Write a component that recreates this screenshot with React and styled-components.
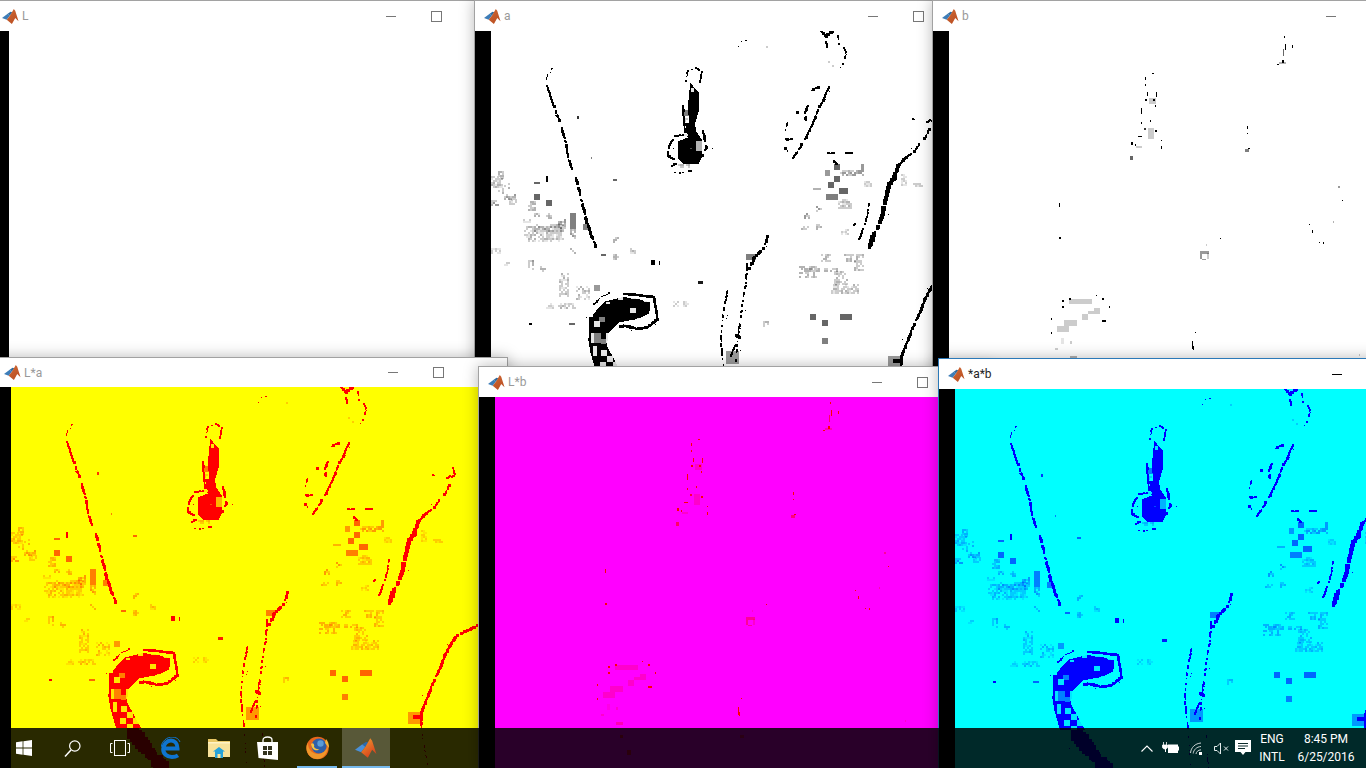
import styled, { createGlobalStyle } from "styled-components";

const GlobalStyle = createGlobalStyle`
    html, body {
        margin: 0;
        padding: 0;
        background: #000;
        overflow: hidden;
    }

    * {
        box-sizing: border-box;
    }
`;

const Desktop = styled.div`
    font-family: Roboto, "Noto Sans", sans-serif;
    height: 768px;
    overflow: hidden;
    position: relative;
    width: 1366px;
`;

const Janela = styled.div`
    background: #fff;
    border: 1px solid ${(p) => (p.$ativa ? "#2b79b8" : "#a2a2a2")};
    box-shadow: 0 0 14px rgba(0, 0, 0, 0.28);
    display: flex;
    flex-direction: column;
    height: ${(p) => 770 - p.$y}px;
    left: ${(p) => p.$x - 1}px;
    overflow: hidden;
    position: absolute;
    top: ${(p) => p.$y}px;
    width: 514px;
`;

const BarraTitulo = styled.div`
    align-items: center;
    background: #fff;
    display: grid;
    flex: none;
    grid-template-columns: 393px 45px 1fr;
    height: ${(p) => p.$altura}px;
`;

const Titulo = styled.div`
    align-items: center;
    color: ${(p) => (p.$ativa ? "#222" : "#999")};
    display: flex;
    font-size: 12px;
    gap: 3px;
    padding-left: 9px;
`;

const Minimizar = styled.span`
    background: ${(p) => (p.$ativa ? "#000" : "#777")};
    display: block;
    height: 1px;
    width: 10px;
`;

const Maximizar = styled.span`
    border: 1px solid #777;
    display: block;
    height: 11px;
    width: 11px;
`;

const Corpo = styled.div`
    display: flex;
    flex: 1;
    min-height: 0;
`;

const Faixa = styled.div`
    background: #000;
    flex: none;
    width: 16px;
`;

const Imagem = styled.div`
    background: ${(p) => p.$fundo};
    flex: 1;
    overflow: hidden;
`;

const Desenho = styled.svg`
    display: block;
    shape-rendering: crispEdges;
`;

const BarraTarefas = styled.div`
    align-items: stretch;
    background: rgba(0, 0, 0, 0.84);
    bottom: 0;
    display: flex;
    height: 40px;
    justify-content: space-between;
    left: 0;
    position: absolute;
    width: 1366px;
`;

const Inicio = styled.div`
    display: flex;
`;

const Tarefa = styled.div`
    align-items: center;
    background: ${(p) => (p.$selecionada ? "rgba(255, 255, 255, 0.22)" : "transparent")};
    display: flex;
    justify-content: center;
    margin-left: ${(p) => p.$recuo || 0}px;
    position: relative;
    width: ${(p) => p.$largura || 48}px;

    &::after {
        background: #76b9ed;
        bottom: 0;
        content: "";
        display: ${(p) => (p.$aberta ? "block" : "none")};
        height: 2px;
        left: ${(p) => (p.$selecionada ? 0 : 5)}px;
        position: absolute;
        right: ${(p) => (p.$selecionada ? 0 : 5)}px;
    }
`;

const Bandeja = styled.div`
    align-items: center;
    color: #fff;
    display: flex;
    font-size: 12px;
    padding-right: 7px;
`;

const IconeBandeja = styled.div`
    align-items: center;
    display: flex;
    justify-content: center;
    width: ${(p) => p.$largura}px;
`;

const Idioma = styled.div`
    line-height: 18px;
    text-align: center;
    width: 42px;
`;

const Relogio = styled.div`
    line-height: 18px;
    text-align: center;
    width: 66px;
`;

// traços: [largura, pontos], em coordenadas 3x da imagem
const tracos = [
    [3, "185,112 170,125 166,150"],
    [6, "168,165 185,215 205,270"],
    [7, "212,290 222,325 232,380 245,420"],
    [8, "255,440 265,480 275,520 285,565 300,610 315,648"],
    [5, "585,150 590,120 615,112 632,120 628,150 615,165"],
    [6, "575,225 578,262 582,300"],
    [6, "590,310 550,316 535,345 530,375 548,385"],
    [6, "636,300 645,350 635,372"],
    [5, "540,405 555,398"],
    [4, "550,425 575,425 600,420"],
    [8, "990,0 1005,15 1025,0"],
    [5, "1040,15 1045,40"],
    [5, "1060,50 1065,70 1055,100 1040,120"],
    [5, "1005,30 1010,50"],
    [6, "1015,165 1000,200 980,240 965,280 945,320 925,355 905,382"],
    [6, "965,178 985,168"],
    [8, "950,225 942,245 945,268"],
    [7, "910,240 920,245"],
    [4, "890,275 882,295 885,305"],
    [6, "885,325 902,325"],
    [6, "882,350 890,360"],
    [2, "743,45 750,32 770,28"],
    [11, "1220,405 1210,440 1195,460 1185,500 1175,550 1160,590 1145,620 1135,650"],
    [7, "1225,400 1245,380 1270,360 1285,340"],
    [6, "1300,325 1315,295"],
    [5, "1320,270 1332,265 1322,232"],
    [5, "1265,265 1278,263"],
    [6, "1305,275 1318,268"],
    [5, "1135,520 1125,570 1105,625"],
    [5, "1095,570 1085,590"],
    [3, "1290,235 1285,245"],
    [6, "1010,366 1028,366"],
    [6, "1065,366 1083,366"],
    [7, "1028,390 1038,400"],
    [7, "830,615 820,650 790,680 775,715"],
    [5, "768,700 765,760 755,810 748,870 740,920 735,990"],
    [5, "710,779 695,850 690,940 700,1020"],
    [8, "735,914 745,919"],
    [6, "720,974 735,939"],
    [3, "755,1039 760,1139"],
    [3, "700,1030 708,1139"],
    [4, "310,819 330,799 360,784"],
    [7, "400,789 450,794 490,799 495,839 500,864 470,889 440,894 400,884 380,889"],
    [6, "298,860 296,940 320,1020"],
    [7, "1400,714 1375,729 1340,744 1320,769"],
    [7, "1320,769 1300,809 1285,849 1265,889 1250,929 1230,979 1230,1019"],
    [3, "1230,1019 1250,1139"],
    [30, "360,1030 455,1143"],
];

const manchas = [
    "598,155 612,172 625,185 625,235 612,278 596,278 590,235 594,190",
    "582,275 612,275 615,300 632,325 635,375 622,400 580,400 562,385 562,330 590,320",
    "340,812 395,798 440,803 478,815 475,847 440,864 385,874 352,908 348,945 390,1023 315,1023 297,960 295,880 308,848",
];

// células: [x, y, largura, altura, opacidade]
const celulas = [
    [0, 435, 36, 35, 0.2], [20, 420, 18, 20, 0.25], [40, 455, 16, 14, 0.25], [20, 470, 18, 18, 0.2],
    [40, 490, 36, 18, 0.3], [55, 505, 20, 18, 0.2], [0, 508, 20, 16, 0.3], [130, 490, 18, 18, 0.55],
    [165, 508, 18, 18, 0.55], [110, 510, 20, 30, 0.25], [130, 545, 16, 12, 0.2], [165, 545, 18, 16, 0.3],
    [238, 545, 18, 50, 0.5], [238, 595, 18, 30, 0.3], [275, 580, 18, 18, 0.5], [95, 565, 20, 12, 0.15],
    [100, 585, 120, 45, 0.2], [130, 580, 90, 20, 0.25], [200, 565, 20, 30, 0.3], [365, 617, 18, 16, 0.3],
    [238, 650, 16, 16, 0.25], [365, 670, 18, 16, 0.25], [418, 652, 16, 16, 0.2], [330, 670, 14, 6, 0.6],
    [110, 688, 18, 30, 0.3], [148, 705, 16, 14, 0.3], [40, 688, 16, 14, 0.15], [130, 452, 18, 6, 0.6],
    [365, 445, 14, 6, 0.6], [165, 435, 6, 18, 1], [0, 650, 30, 16, 0.15], [1030, 400, 18, 18, 0.55],
    [1003, 418, 14, 18, 0.4], [1048, 418, 70, 16, 0.3], [1030, 436, 18, 16, 0.55], [1010, 453, 20, 18, 0.55],
    [1045, 472, 26, 18, 0.55], [1005, 490, 36, 18, 0.5], [1040, 505, 40, 30, 0.2], [960, 470, 30, 6, 0.3],
    [1110, 400, 10, 16, 0.4], [940, 545, 16, 14, 0.3], [975, 525, 18, 16, 0.3], [925, 585, 30, 12, 0.2],
    [975, 580, 18, 14, 0.25], [1050, 595, 20, 14, 0.2], [1265, 455, 30, 12, 0.2], [1120, 450, 24, 16, 0.15],
    [1230, 430, 16, 36, 0.15], [990, 670, 30, 20, 0.25], [1060, 670, 60, 20, 0.25], [925, 705, 50, 35, 0.25],
    [940, 710, 100, 12, 0.25], [1030, 720, 40, 40, 0.2], [1020, 760, 80, 25, 0.2], [1090, 690, 30, 25, 0.2],
    [957, 849, 18, 18, 0.55], [993, 867, 18, 18, 0.55], [1048, 849, 36, 18, 0.55], [993, 921, 18, 18, 0.5],
    [545, 810, 14, 18, 0.15], [575, 810, 14, 18, 0.15], [200, 815, 50, 14, 0.2], [165, 815, 20, 14, 0.15],
    [205, 725, 30, 70, 0.2], [255, 765, 40, 40, 0.2], [310, 762, 18, 18, 0.4], [235, 875, 18, 8, 0.6],
    [815, 870, 18, 16, 0.2], [1190, 975, 36, 35, 0.4], [1205, 985, 30, 10, 1], [705, 960, 40, 40, 0.4],
    [765, 668, 30, 20, 0.5], [480, 688, 12, 14, 1], [505, 690, 3, 12, 1], [622, 750, 14, 10, 0.9],
    [115, 875, 8, 6, 1], [258, 255, 5, 10, 0.8], [300, 378, 4, 6, 0.5], [1012, 90, 18, 18, 0.25],
    [578, 238, 18, 18, 0.5], [580, 255, 22, 18, 0.25], [562, 400, 36, 12, 0.25], [825, 40, 4, 10, 0.2],
];

// células claras por cima da mancha (xadrez do gancho)
const furos = [
    [308, 869, 18, 18, 0.85], [345, 905, 16, 30, 0.85], [330, 958, 18, 18, 0.85], [365, 958, 18, 18, 0.85],
    [347, 976, 18, 18, 0.85], [365, 994, 18, 18, 0.85], [328, 994, 18, 18, 0.85], [347, 1012, 18, 11, 0.85],
    [418, 832, 18, 14, 0.85], [438, 860, 36, 14, 0.85], [400, 872, 30, 10, 0.85], [300, 905, 10, 30, 0.85],
    [305, 945, 12, 30, 0.85], [310, 905, 20, 30, 0.5], [330, 925, 16, 14, 0.5], [325, 858, 18, 16, 0.5],
    [615, 330, 18, 30, 0.7], [598, 350, 4, 4, 0.3], [380, 798, 16, 8, 0.9], [420, 798, 18, 6, 0.9],
    [458, 806, 18, 8, 0.9], [345, 812, 12, 8, 0.9], [578, 310, 12, 6, 0.9], [600, 170, 8, 12, 0.9],
];

const pontos = [
    [1006, 16, 3, 6, 1], [1009, 38, 3, 18, 1], [1030, 42, 3, 10, 1], [1002, 55, 2, 20, 0.6], [985, 98, 4, 3, 1],
    [990, 92, 20, 6, 0.3], [998, 87, 8, 8, 1], [610, 126, 6, 3, 1], [588, 138, 3, 8, 1], [588, 158, 3, 6, 1],
    [594, 183, 3, 12, 1], [622, 183, 3, 14, 1], [600, 200, 20, 18, 0.2], [587, 205, 6, 6, 1], [612, 205, 6, 6, 1],
    [617, 222, 3, 6, 1], [576, 230, 3, 20, 1], [576, 272, 3, 6, 1], [604, 266, 3, 6, 1], [584, 290, 6, 6, 0.8],
    [596, 292, 18, 32, 0.2], [618, 296, 5, 8, 1], [566, 315, 14, 3, 1], [546, 332, 6, 10, 1], [558, 338, 3, 6, 1],
    [560, 345, 20, 5, 0.2], [636, 326, 4, 4, 1], [636, 345, 3, 10, 1], [542, 376, 10, 10, 0.6], [895, 285, 3, 8, 1],
    [894, 305, 3, 3, 1], [888, 355, 12, 8, 0.5], [898, 350, 4, 4, 1], [330, 516, 3, 12, 1], [330, 618, 6, 6, 1],
    [1168, 465, 6, 6, 0.4], [1179, 507, 3, 3, 1], [1152, 570, 3, 5, 0.3], [1080, 578, 3, 3, 1], [1090, 596, 3, 10, 1],
    [1110, 632, 4, 3, 1], [1121, 632, 4, 8, 1], [813, 621, 4, 4, 1], [752, 660, 8, 25, 0.4], [760, 660, 20, 8, 0.4],
    [775, 665, 6, 20, 0.2], [760, 685, 10, 3, 0.4], [772, 640, 3, 4, 0.2], [360, 802, 5, 5, 1], [340, 808, 5, 5, 1],
    [340, 826, 5, 5, 1], [460, 802, 4, 4, 1], [442, 792, 3, 3, 1], [480, 826, 3, 5, 1], [305, 862, 3, 5, 1],
    [305, 904, 3, 5, 1], [460, 868, 12, 5, 1], [360, 805, 70, 14, 0.15], [325, 885, 35, 18, 0.2], [345, 868, 40, 18, 0.2],
    [400, 848, 18, 20, 0.15], [418, 840, 34, 10, 0.2], [436, 830, 16, 18, 0.15], [336, 922, 10, 16, 0.12],
    [362, 930, 6, 8, 0.15], [318, 950, 8, 6, 0.15], [364, 975, 20, 8, 0.3], [730, 930, 3, 25, 1], [737, 903, 3, 3, 1],
    [733, 945, 3, 12, 1], [1230, 970, 2, 6, 0.2], [375, 1015, 10, 8, 0.7], [395, 1060, 14, 14, 0.7], [735, 1015, 12, 8, 0.5],
];

// gerador fixo, para o serrilhado sair sempre igual
let semente = 20160625;
function sorteio() {
    semente = (semente * 1664525 + 1013904223) % 4294967296;
    return semente / 4294967296;
}

const grade = (v) => Math.round(v / 3) * 3;

function serrilhar() {
    const saida = [];

    tracos.forEach(([largura, pts]) => {
        const lista = pts.split(" ").map((p) => p.split(",").map(Number));
        const chanceFalha = largura <= 3 ? 0.35 : largura <= 5 ? 0.18 : 0.05;
        let pular = 0;

        for (let i = 0; i < lista.length - 1; i++) {
            const [x1, y1] = lista[i];
            const [x2, y2] = lista[i + 1];
            const passos = Math.max(1, Math.round(Math.hypot(x2 - x1, y2 - y1) / 3));

            for (let s = 0; s <= passos; s++) {
                if (pular > 0) {
                    pular--;
                    continue;
                }
                if (sorteio() < chanceFalha) {
                    pular = 1 + Math.floor(sorteio() * 3);
                    continue;
                }

                const x = x1 + ((x2 - x1) * s) / passos;
                const y = y1 + ((y2 - y1) * s) / passos;
                const w = Math.max(3, grade(largura * (0.6 + sorteio() * 0.7)));
                saida.push([grade(x - w / 2), grade(y - w / 2), w, w, 1]);

                if (sorteio() < 0.03) {
                    const dx = (sorteio() - 0.5) * (largura * 4 + 18);
                    const dy = (sorteio() - 0.5) * 18;
                    saida.push([grade(x + dx), grade(y + dy), 3, 3, 1]);
                }
            }
        }
    });

    return saida;
}

// células fracas viram uma textura de ladrilhos pequenos
function texturizar(lista) {
    const saida = [];

    lista.forEach(([x, y, w, h, o]) => {
        if (o > 0.35) {
            saida.push([x, y, w, h, o]);
            return;
        }
        for (let ty = y; ty < y + h; ty += 6) {
            for (let tx = x; tx < x + w; tx += 6) {
                if (sorteio() < 0.62) {
                    saida.push([tx, ty, 6, 6, o * (0.6 + sorteio() * 0.8)]);
                }
            }
        }
    });

    return saida;
}

const tracosPixel = serrilhar();
const celulasPixel = texturizar(celulas);

function agrupar(lista) {
    const grupos = {};

    lista.forEach(([x, y, w, h, o]) => {
        const chave = (Math.round(o * 10) / 10).toFixed(1);
        grupos[chave] = (grupos[chave] || "") + `M${x} ${y}h${w}v${h}h${-w}z`;
    });

    return Object.entries(grupos);
}

function Celulas({ lista, cor }) {
    return agrupar(lista).map(([o, d]) => (
        <path key={o} d={d} fill={cor} fillOpacity={Math.max(Number(o), 0.1)} />
    ));
}

function Marcas({ tipo, tinta, fundo }) {
    return (
        <Desenho width="468" height="381" viewBox="0 0 1404 1143">
            {tipo === "cheio" && (
                <>
                    <Celulas lista={celulasPixel} cor={tinta} />
                    {manchas.map((m) => (
                        <polygon key={m} points={m} fill={tinta} />
                    ))}
                    <Celulas lista={tracosPixel} cor={tinta} />
                    <Celulas lista={furos} cor={fundo} />
                </>
            )}
            {tipo === "pontos" && <Celulas lista={pontos} cor={tinta} />}
        </Desenho>
    );
}

function LogoMatlab({ tamanho = 18, vivo }) {
    return (
        <svg width={tamanho} height={tamanho} viewBox="0 0 18 18">
            <defs>
                <linearGradient id={vivo ? "picoVivo" : "pico"} x1="0" y1="0" x2="0.6" y2="1">
                    <stop offset="0" stopColor={vivo ? "#f0a030" : "#d06a35"} />
                    <stop offset="1" stopColor={vivo ? "#d8401c" : "#bb4f22"} />
                </linearGradient>
            </defs>
            <polygon points="0,10.5 6,6 8.5,8 5,12.5" fill={vivo ? "#4a90d8" : "#3d7db8"} />
            <polygon points="6,6 8.5,8 11,4.5 9,4" fill={vivo ? "#2a6ab0" : "#2f6ba0"} />
            <polygon
                points="8.5,8 12.5,1 14,3 17.5,14 14,10.5 10.5,17 5,12.5"
                fill={`url(#${vivo ? "picoVivo" : "pico"})`}
            />
        </svg>
    );
}

const IconeWindows = () => (
    <svg width="16" height="16" viewBox="0 0 16 16" fill="#fff">
        <polygon points="0,2.3 6.6,1.3 6.6,7.6 0,7.6" />
        <polygon points="7.4,1.2 16,0 16,7.6 7.4,7.6" />
        <polygon points="0,8.4 6.6,8.4 6.6,14.7 0,13.8" />
        <polygon points="7.4,8.4 16,8.4 16,16 7.4,14.8" />
    </svg>
);

const IconeBusca = () => (
    <svg width="17" height="17" viewBox="0 0 17 17" fill="none" stroke="#fff" strokeWidth="1.2">
        <circle cx="10.8" cy="6" r="5.2" />
        <line x1="7" y1="10" x2="1" y2="16.5" strokeWidth="1.5" />
    </svg>
);

const IconeVisaoTarefas = () => (
    <svg width="20" height="16" viewBox="0 0 20 16" fill="none" stroke="#fff" strokeWidth="1">
        <rect x="4.5" y="0.5" width="11" height="15" />
        <path d="M2.5 3.5H0.5V12.5H2.5M17.5 3.5H19.5V12.5H17.5" />
    </svg>
);

const IconeEdge = () => (
    <svg width="20" height="22" viewBox="0 0 20 22" fill="none">
        <path d="M3.5 11.5H16.5C16.5 6.5 13.5 3.5 10 3.5C6 3.5 2.5 7 2.2 12C2 16.5 6 20 11 20C13.5 20 15.5 19.4 17 18.4" stroke="#0f74cf" strokeWidth="4" />
        <path d="M0 10C1 4 6 0 11 0C15 0 18 2 19 5" stroke="#0f74cf" strokeWidth="1" />
    </svg>
);

const IconePastas = () => (
    <svg width="22" height="19" viewBox="0 0 22 19">
        <polygon points="0,0 8,0 10,2 22,2 22,18 0,18" fill="#e9c765" />
        <rect x="0" y="4" width="22" height="14" fill="#f8e29a" />
        <rect x="0" y="3" width="22" height="1.5" fill="#fff2c4" />
        <polygon points="11,8 17,12.5 15,12.5 15,19 7,19 7,12.5 5,12.5" fill="#27a2d8" />
        <rect x="9.5" y="15" width="3" height="4" fill="#f8e29a" />
    </svg>
);

const IconeLoja = () => (
    <svg width="21" height="24" viewBox="0 0 21 24">
        <path d="M6 6V4C6 2 8 1 10.5 1S15 2 15 4V6" fill="none" stroke="#fff" strokeWidth="1.3" />
        <polygon points="0,6 21,6 21,24 1.5,22" fill="#fff" />
        <g fill="#33331f">
            <rect x="6" y="10" width="4" height="4" />
            <rect x="11" y="10" width="4" height="4" />
            <rect x="6" y="15" width="4" height="4" />
            <rect x="11" y="15" width="4" height="4" />
        </g>
    </svg>
);

const IconeFirefox = () => (
    <svg width="23" height="24" viewBox="0 0 23 24">
        <circle cx="11.5" cy="12" r="11.2" fill="#e8661c" />
        <circle cx="13" cy="10" r="7.5" fill="#2f5fa8" />
        <circle cx="14.5" cy="7.5" r="3.2" fill="#5a9bd8" />
        <path d="M2 7C2 14 7 18 12 18C16 18 20 15 22 10C22 17 17 23 11.5 23C5 23 0.5 18 0.5 12C0.5 10 1 8.5 2 7Z" fill="#f0972a" />
        <path d="M5 8C7 6 9 9 8 11C9.5 13 12 13.5 13.5 13C11.5 15.5 6 15 5 8Z" fill="#f6c244" />
        <path d="M20 3C22 5 23 8 23 12L19 7Z" fill="#f5b53a" />
    </svg>
);

const IconeBateria = () => (
    <svg width="17" height="12" viewBox="0 0 17 12">
        <path d="M1.5 0V3M4.5 0V3M0.5 3H5.5V5C5.5 6.5 4 7 3 7S0.5 6.5 0.5 5Z" fill="#fff" stroke="#fff" strokeWidth="0.8" />
        <rect x="3" y="7" width="1" height="3" fill="#fff" />
        <rect x="6" y="2.5" width="10" height="8.5" fill="#fff" />
        <rect x="15.8" y="4.5" width="1.2" height="4" fill="#fff" />
    </svg>
);

const IconeWifi = () => (
    <svg width="13" height="13" viewBox="0 0 13 13" fill="none" stroke="#c9d2d2">
        <path d="M0.5 11C1 5.5 5 1.5 11 1" />
        <path d="M3.2 11.5C3.5 8 6.5 4.8 11 4.5" />
        <path d="M6 12C6.2 10 8 8 11 7.8" />
        <rect x="9" y="10" width="3" height="3" fill="#fff" stroke="none" />
    </svg>
);

const IconeSom = () => (
    <svg width="15" height="13" viewBox="0 0 15 13" fill="none" stroke="#e6eeee" strokeWidth="1">
        <path d="M0.5 4.5H3L6.5 1V12L3 8.5H0.5Z" />
        <path d="M10 4.5L14 8.5M14 4.5L10 8.5" />
    </svg>
);

const IconeNotificacao = () => (
    <svg width="16" height="16" viewBox="0 0 16 16">
        <path d="M0 0H16V12H10.5L8 15L5.5 12H0Z" fill="#fff" />
        <path d="M3 3.5H13M3 6H13M3 8.5H10" stroke="#0d2b2b" strokeWidth="1" />
    </svg>
);

const IconeSeta = () => (
    <svg width="12" height="7" viewBox="0 0 12 7" fill="none" stroke="#fff" strokeWidth="1.1">
        <polyline points="0.5,6.5 6,1 11.5,6.5" />
    </svg>
);

const janelas = [
    { nome: "L", x: -7, y: 0, barra: 30, fundo: "#fff" },
    { nome: "a", x: 475, y: 0, barra: 30, fundo: "#fff", tinta: "#000", tipo: "cheio" },
    { nome: "b", x: 933, y: 0, barra: 30, fundo: "#fff", tinta: "#000", tipo: "pontos" },
    { nome: "L*a", x: -5, y: 357, barra: 29, fundo: "#ffff00", tinta: "#ff0000", tipo: "cheio" },
    { nome: "L*b", x: 479, y: 366, barra: 30, fundo: "#ff00ff", tinta: "#ff0000", tipo: "pontos" },
    { nome: "*a*b", x: 939, y: 358, barra: 30, fundo: "#00ffff", tinta: "#0000ff", tipo: "cheio", ativa: true },
];

function App() {
    return (
        <Desktop>
            <GlobalStyle />

            {janelas.map((j) => (
                <Janela key={j.nome} $x={j.x} $y={j.y} $ativa={j.ativa}>
                    <BarraTitulo $altura={j.barra}>
                        <Titulo $ativa={j.ativa}>
                            <LogoMatlab tamanho={17} />
                            {j.nome}
                        </Titulo>
                        <Minimizar $ativa={j.ativa} />
                        <Maximizar />
                    </BarraTitulo>
                    <Corpo>
                        <Faixa />
                        <Imagem $fundo={j.fundo}>
                            <Marcas tipo={j.tipo} tinta={j.tinta} fundo={j.fundo} />
                        </Imagem>
                    </Corpo>
                </Janela>
            ))}

            <BarraTarefas>
                <Inicio>
                    <Tarefa><IconeWindows /></Tarefa>
                    <Tarefa><IconeBusca /></Tarefa>
                    <Tarefa><IconeVisaoTarefas /></Tarefa>
                    <Tarefa $recuo={2} $largura={49}><IconeEdge /></Tarefa>
                    <Tarefa><IconePastas /></Tarefa>
                    <Tarefa $largura={49}><IconeLoja /></Tarefa>
                    <Tarefa $largura={50} $aberta><IconeFirefox /></Tarefa>
                    <Tarefa $largura={48} $aberta $selecionada><LogoMatlab tamanho={22} vivo /></Tarefa>
                </Inicio>

                <Bandeja>
                    <IconeBandeja $largura={16}><IconeSeta /></IconeBandeja>
                    <IconeBandeja $largura={30}><IconeBateria /></IconeBandeja>
                    <IconeBandeja $largura={22}><IconeWifi /></IconeBandeja>
                    <IconeBandeja $largura={28}><IconeSom /></IconeBandeja>
                    <IconeBandeja $largura={16}><IconeNotificacao /></IconeBandeja>
                    <Idioma>ENG<br />INTL</Idioma>
                    <Relogio>8:45 PM<br />6/25/2016</Relogio>
                </Bandeja>
            </BarraTarefas>
        </Desktop>
    );
}

export default App;
